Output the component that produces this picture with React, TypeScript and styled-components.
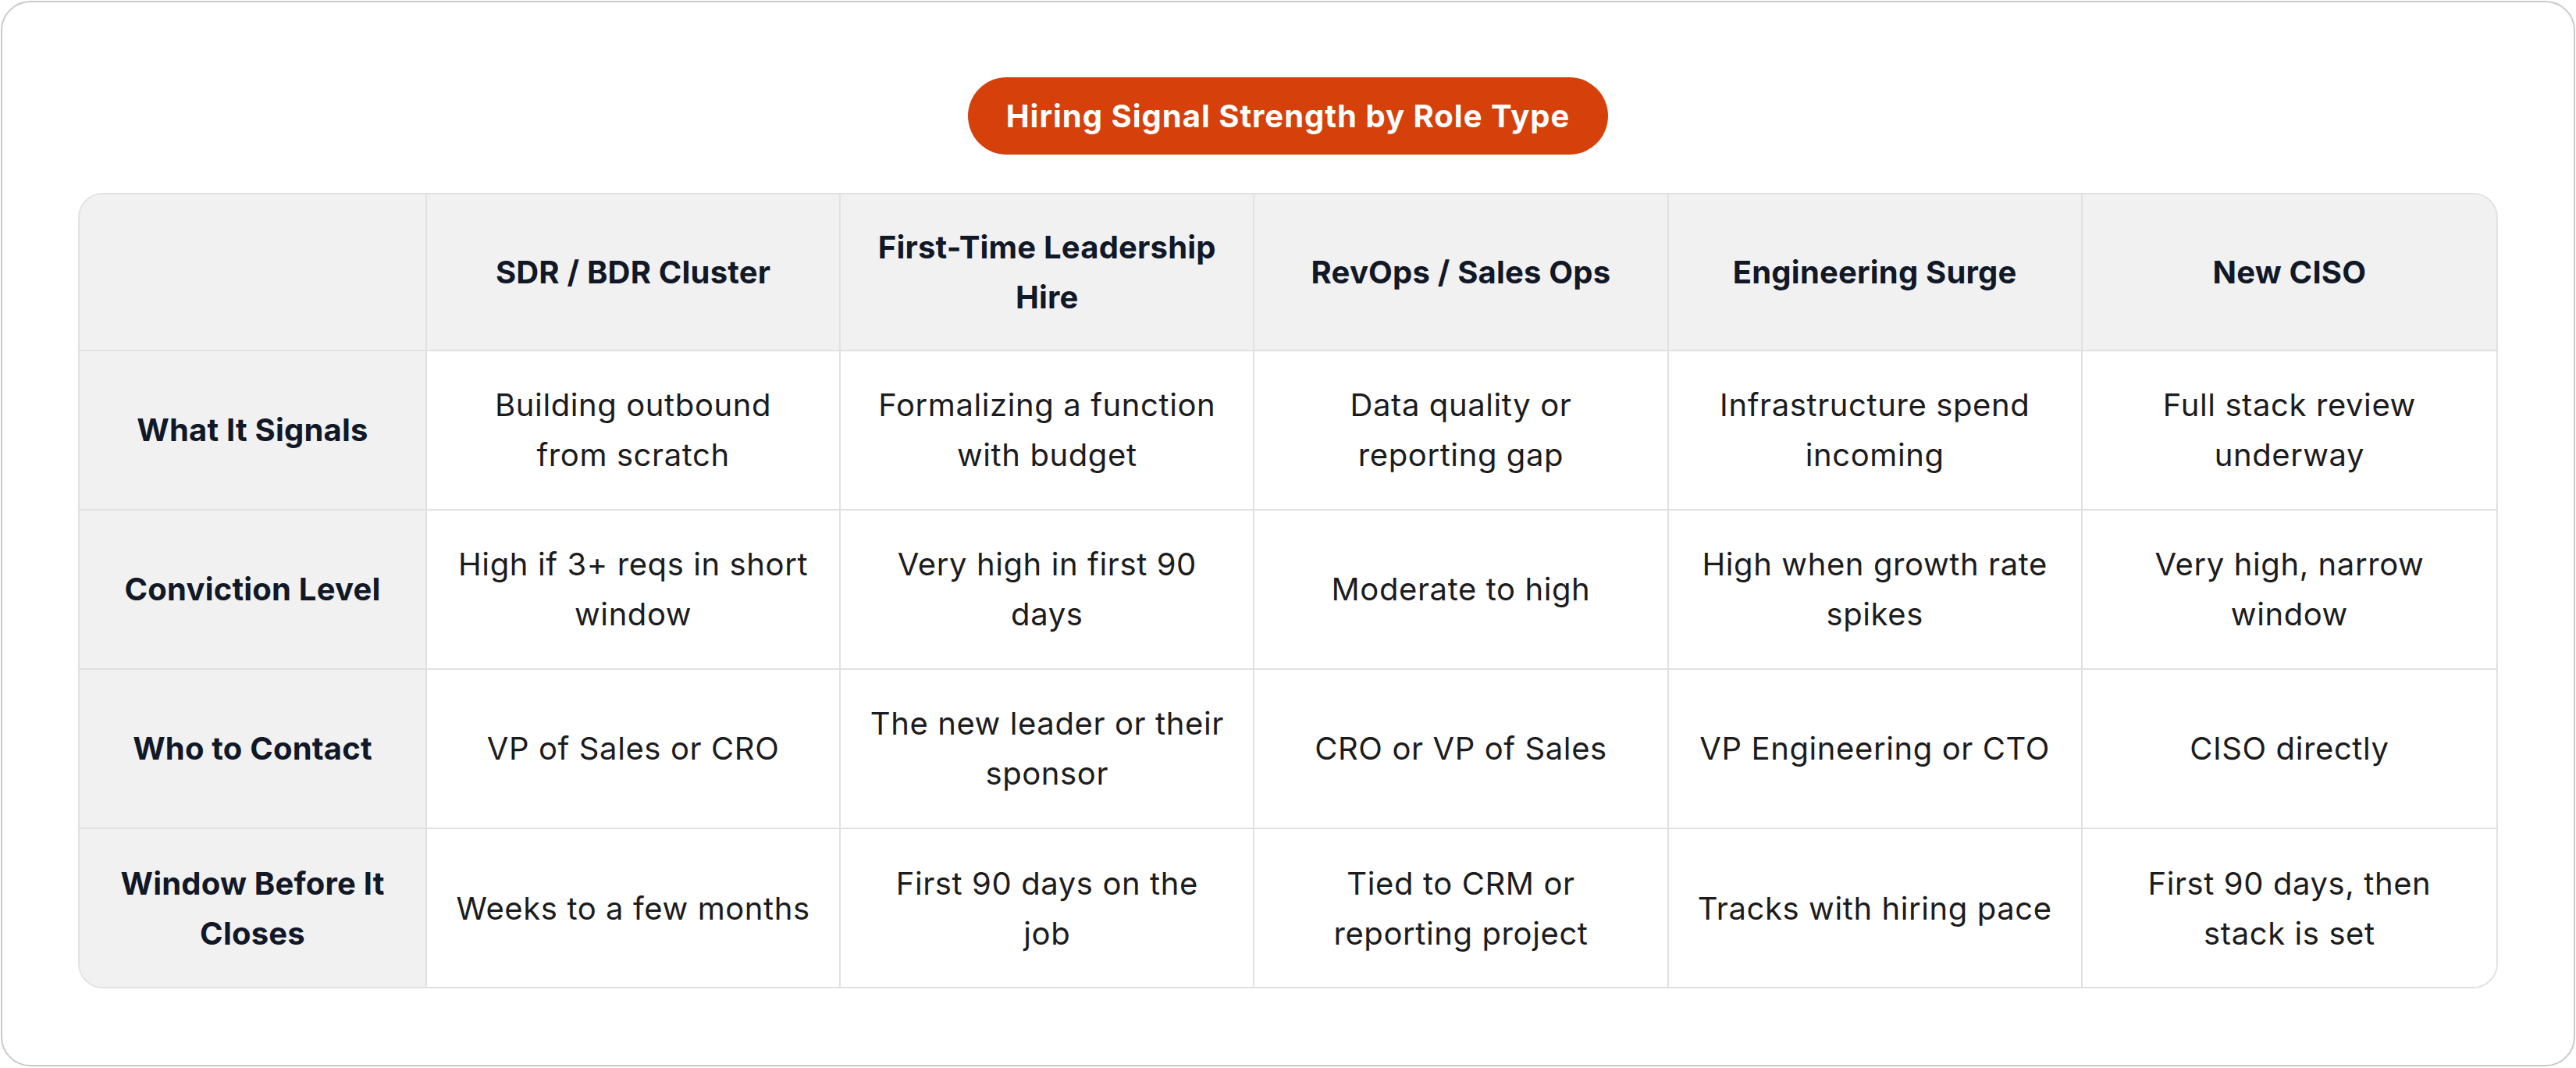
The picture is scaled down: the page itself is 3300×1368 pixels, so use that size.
import React from "react";
import styled, { createGlobalStyle } from "styled-components";

const Global = createGlobalStyle`
  html, body { margin: 0; padding: 0; background: #ffffff; }
  body { font-family: Inter, "Noto Sans", Arial, sans-serif; }
  * { box-sizing: border-box; }
`;

const Page = styled.div`
  padding: 1px;
  width: 3300px;
  height: 1368px;
`;

const Card = styled.section`
  height: 1365px;
  border: 2px solid #c9cacd;
  border-radius: 38px;
  background: #ffffff;
  padding: 96px 97px 98px;
  display: flex;
  flex-direction: column;
  align-items: center;
  gap: 49px;
`;

const TitlePill = styled.h1`
  margin: 0;
  height: 100px;
  padding: 0 49px;
  border-radius: 50px;
  background: #d6400b;
  color: #ffffff;
  font-size: 40px;
  font-weight: 700;
  display: flex;
  align-items: center;
  letter-spacing: 1px;
`;

const TableFrame = styled.div`
  width: 100%;
  border: 2px solid #e1e1e3;
  border-radius: 32px;
  overflow: hidden;
  display: grid;
  grid-template-columns: 445px repeat(5, 1fr);
`;

const Cell = styled.div<{ $head?: boolean; $shaded?: boolean; $lastCol?: boolean; $lastRow?: boolean; $top?: boolean }>`
  background: ${(p) => (p.$shaded ? "#f1f1f1" : "#ffffff")};
  border-right: ${(p) => (p.$lastCol ? "none" : "2px solid #e1e1e3")};
  border-bottom: ${(p) => (p.$lastRow ? "none" : "2px solid #e1e1e3")};
  padding: ${(p) => (p.$top ? "35px 20px" : "38px 20px")};
  min-height: ${(p) => (p.$top ? "201px" : "204px")};
  display: flex;
  flex-direction: column;
  align-items: center;
  justify-content: center;
  text-align: center;
  font-size: 40px;
  line-height: 64px;
  font-weight: ${(p) => (p.$head ? 700 : 400)};
  letter-spacing: ${(p) => (p.$head ? "0.2px" : "0.6px")};
  color: ${(p) => (p.$head ? "#111827" : "#1c1c1e")};
`;

const Line = styled.span`
  display: block;
  white-space: nowrap;
`;

const columns: string[][] = [
  ["SDR / BDR Cluster"],
  ["First-Time Leadership", "Hire"],
  ["RevOps / Sales Ops"],
  ["Engineering Surge"],
  ["New CISO"],
];

const rows: { label: string[]; cells: string[][] }[] = [
  {
    label: ["What It Signals"],
    cells: [
      ["Building outbound", "from scratch"],
      ["Formalizing a function", "with budget"],
      ["Data quality or", "reporting gap"],
      ["Infrastructure spend", "incoming"],
      ["Full stack review", "underway"],
    ],
  },
  {
    label: ["Conviction Level"],
    cells: [
      ["High if 3+ reqs in short", "window"],
      ["Very high in first 90", "days"],
      ["Moderate to high"],
      ["High when growth rate", "spikes"],
      ["Very high, narrow", "window"],
    ],
  },
  {
    label: ["Who to Contact"],
    cells: [
      ["VP of Sales or CRO"],
      ["The new leader or their", "sponsor"],
      ["CRO or VP of Sales"],
      ["VP Engineering or CTO"],
      ["CISO directly"],
    ],
  },
  {
    label: ["Window Before It", "Closes"],
    cells: [
      ["Weeks to a few months"],
      ["First 90 days on the", "job"],
      ["Tied to CRM or", "reporting project"],
      ["Tracks with hiring pace"],
      ["First 90 days, then", "stack is set"],
    ],
  },
];

const Lines = ({ lines }: { lines: string[] }) => (
  <>
    {lines.map((l, i) => (
      <Line key={i}>{l}</Line>
    ))}
  </>
);

export default function App() {
  return (
    <>
      <Global />
      <Page>
        <Card>
          <TitlePill>Hiring Signal Strength by Role Type</TitlePill>
          <TableFrame role="table">
            <Cell $head $shaded $top />
            {columns.map((c, i) => (
              <Cell key={i} $head $shaded $top $lastCol={i === columns.length - 1}>
                <Lines lines={c} />
              </Cell>
            ))}
            {rows.map((r, ri) => (
              <React.Fragment key={ri}>
                <Cell $head $shaded $lastRow={ri === rows.length - 1}>
                  <Lines lines={r.label} />
                </Cell>
                {r.cells.map((c, ci) => (
                  <Cell key={ci} $lastCol={ci === r.cells.length - 1} $lastRow={ri === rows.length - 1}>
                    <Lines lines={c} />
                  </Cell>
                ))}
              </React.Fragment>
            ))}
          </TableFrame>
        </Card>
      </Page>
    </>
  );
}
